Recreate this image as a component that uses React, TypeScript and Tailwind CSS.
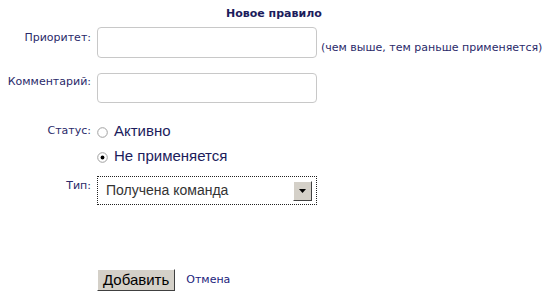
import React, { useState } from 'react';

const labelCls = "text-right text-[11px] leading-[14px] text-[#2a2a6a] pr-[6px]";

export default function App() {
  const [status, setStatus] = useState<'active' | 'off'>('off');

  return (
    <div className="w-[560px] h-[298px] bg-white font-['DejaVu_Sans',Verdana,sans-serif] relative">
      <div className="pt-[7px] pl-[226px] text-[11px] leading-[13px] font-bold text-[#1c1c5c]">
        Новое правило
      </div>

      <div className="grid grid-cols-[97px_1fr] mt-[7px]">
        {/* priority */}
        <div className={labelCls + " pt-[4px]"}>Приоритет:</div>
        <div className="flex items-end">
          <input className="w-[220px] h-[31px] border border-[#c8c8c8] rounded-[4px] outline-none" />
          <span className="ml-[4px] mb-[3px] text-[11px] leading-[14px] text-[#2a2a6a]">
            (чем выше, тем раньше применяется)
          </span>
        </div>

        {/* comment */}
        <div className={labelCls + " pt-[2px] mt-[15px]"}>Комментарий:</div>
        <div className="mt-[15px]">
          <input className="w-[220px] h-[30px] border border-[#c8c8c8] rounded-[4px] outline-none" />
        </div>

        {/* status */}
        <div className={labelCls + " mt-[18px] pt-[3px]"}>Статус:</div>
        <div className="mt-[18px] flex flex-col gap-[6px] font-['Liberation_Sans',Arial,sans-serif] text-[15px] leading-[19px] text-[#1c1c5c]">
          <label className="flex items-center cursor-pointer" onClick={() => setStatus('active')}>
            <Radio checked={status === 'active'} />
            <span className="ml-[6px]">Активно</span>
          </label>
          <label className="flex items-center cursor-pointer" onClick={() => setStatus('off')}>
            <Radio checked={status === 'off'} />
            <span className="ml-[6px]">Не применяется</span>
          </label>
        </div>

        {/* type */}
        <div className={labelCls + " mt-[11px] pt-[3px]"}>Тип:</div>
        <div className="mt-[11px]">
          <div className="w-[220px] h-[29px] border border-dotted border-[#222] flex items-center pl-[8px] pr-[4px]">
            <span className="flex-1 font-['Liberation_Sans',Arial,sans-serif] text-[14px] text-[#333]">
              Получена команда
            </span>
            <div className="w-[19px] h-[20px] bg-[#d4d0c8] border border-t-white border-l-white border-r-[#404040] border-b-[#404040] flex items-center justify-center">
              <svg width="7" height="4" viewBox="0 0 7 4"><path d="M0 0h7L3.5 4z" fill="#000" /></svg>
            </div>
          </div>
        </div>

        {/* actions */}
        <div className="mt-[64px]" />
        <div className="mt-[64px] flex items-center">
          <button className="h-[22px] px-[5px] bg-[#d4d0c8] border border-t-white border-l-white border-r-[#404040] border-b-[#404040] font-['Liberation_Sans',Arial,sans-serif] text-[15px] leading-[18px] text-black">
            Добавить
          </button>
          <a className="ml-[11px] text-[11px] text-[#1c1c7c] cursor-pointer">Отмена</a>
        </div>
      </div>
    </div>
  );
}

function Radio({ checked }: { checked: boolean }) {
  return (
    <svg width="11" height="11" viewBox="0 0 11 11" className="mt-[3px]">
      <circle cx="5.5" cy="5.5" r="4.8" fill="#fff" stroke="#a0a0a0" strokeWidth="1" />
      {checked && <circle cx="5.5" cy="5.5" r="1.9" fill="#000" />}
    </svg>
  );
}
